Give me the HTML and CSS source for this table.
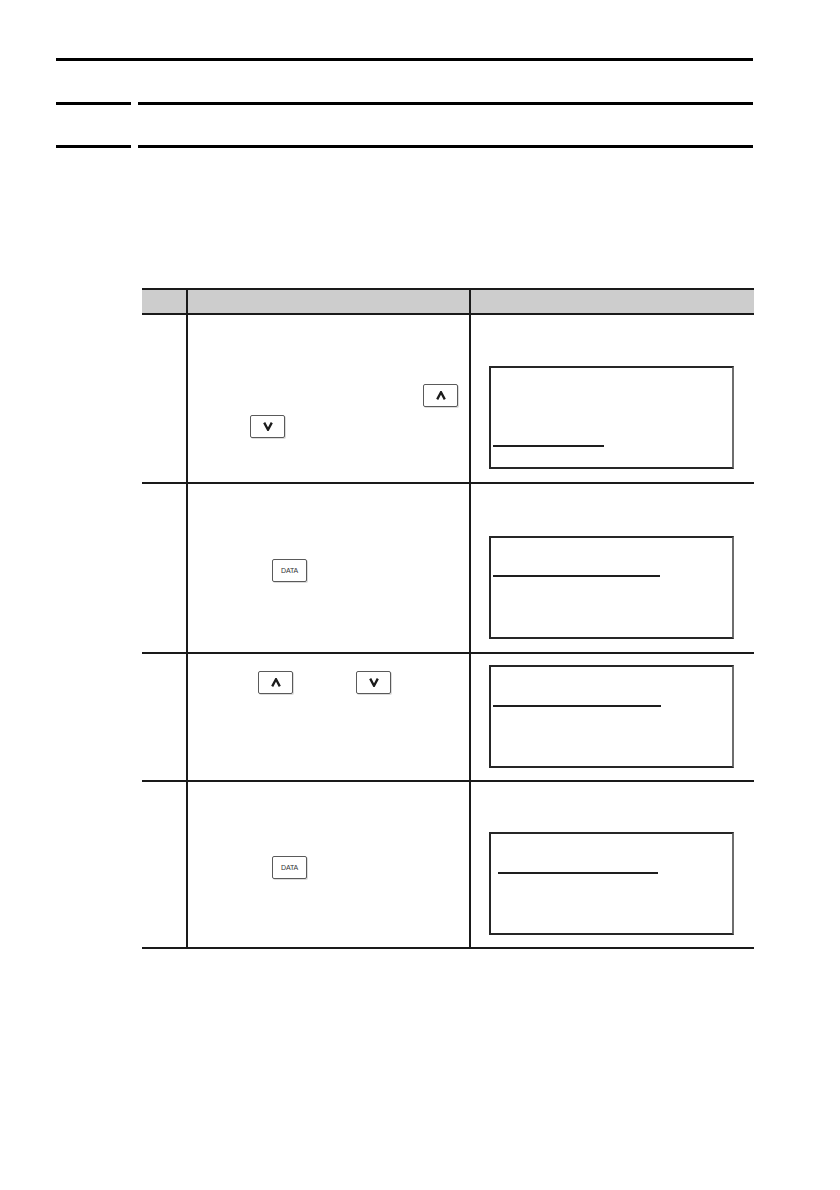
FILE: index.html
```
<!DOCTYPE html>
<html lang="en">
<head>
<meta charset="utf-8">
<title>Operation procedure</title>
<link rel="stylesheet" href="styles.css">
</head>
<body>
<div class="page">
  <div class="head">
    <div class="rule-top"></div>
    <div class="rule-split first"><span class="seg-l"></span><span class="seg-r"></span></div>
    <div class="rule-split second"><span class="seg-l"></span><span class="seg-r"></span></div>
  </div>

  <div class="table">
    <div class="row head-row">
      <div class="cell c1"></div>
      <div class="cell c2"></div>
      <div class="cell c3"></div>
    </div>

    <div class="row r1">
      <div class="cell c1"></div>
      <div class="cell c2">
        <div class="keys-stack">
          <span class="key key-up-r1"><svg viewBox="0 0 10 9" width="10" height="9"><polyline points="1.2,8.4 5,1.2 8.8,8.4"/></svg></span>
          <span class="key key-down-r1"><svg viewBox="0 0 10 9" width="10" height="9"><polyline points="1.2,0.6 5,7.8 8.8,0.6"/></svg></span>
        </div>
      </div>
      <div class="cell c3">
        <div class="lcd lcd-r1"><div class="uline ul-r1"></div></div>
      </div>
    </div>

    <div class="row r2">
      <div class="cell c1"></div>
      <div class="cell c2">
        <span class="key data key-data-r2">DATA</span>
      </div>
      <div class="cell c3">
        <div class="lcd lcd-r2"><div class="uline ul-r2"></div></div>
      </div>
    </div>

    <div class="row r3">
      <div class="cell c1"></div>
      <div class="cell c2">
        <div class="keys-row">
          <span class="key"><svg viewBox="0 0 10 9" width="10" height="9"><polyline points="1.2,8.4 5,1.2 8.8,8.4"/></svg></span>
          <span class="key"><svg viewBox="0 0 10 9" width="10" height="9"><polyline points="1.2,0.6 5,7.8 8.8,0.6"/></svg></span>
        </div>
      </div>
      <div class="cell c3">
        <div class="lcd lcd-r3"><div class="uline ul-r3"></div></div>
      </div>
    </div>

    <div class="row r4">
      <div class="cell c1"></div>
      <div class="cell c2">
        <span class="key data key-data-r4">DATA</span>
      </div>
      <div class="cell c3">
        <div class="lcd lcd-r4"><div class="uline ul-r4"></div></div>
      </div>
    </div>
  </div>
</div>
</body>
</html>
```

FILE: styles.css
```
html, body {
  margin: 0;
  padding: 0;
  background: #ffffff;
}

body {
  font-family: "Liberation Sans", Arial, sans-serif;
  color: #111;
}

.page {
  width: 840px;
  height: 1190px;
  overflow: hidden;
}

/* ---------- heading rules ---------- */
.head {
  padding-top: 58px;
  margin-left: 56px;
  width: 697px;
}

.rule-top {
  height: 3px;
  background: #000;
}

.rule-split {
  display: flex;
  gap: 7px;
}

.rule-split.first {
  margin-top: 41px;
}

.rule-split.second {
  margin-top: 40px;
}

.seg-l {
  display: block;
  width: 75px;
  height: 3px;
  background: #000;
}

.seg-r {
  display: block;
  flex: 1;
  height: 3px;
  background: #000;
}

/* ---------- table ---------- */
.table {
  margin-top: 140px;
  margin-left: 142px;
  width: 612px;
}

.row {
  display: grid;
  grid-template-columns: 46px 283px 283px;
  border-bottom: 2px solid #1a1a1a;
  box-sizing: border-box;
}

.head-row {
  border-top: 2px solid #1a1a1a;
  height: 27px;
  background: #cdcdcd;
}

.r1 { height: 169px; }
.r2 { height: 170px; }
.r3 { height: 128px; }
.r4 { height: 167px; }

.cell {
  box-sizing: border-box;
}

.c1, .c2 {
  border-right: 2px solid #1a1a1a;
}

/* ---------- keys ---------- */
.key {
  box-sizing: border-box;
  display: flex;
  align-items: center;
  justify-content: center;
  width: 35px;
  height: 23px;
  border: 1px solid #5a5a5a;
  border-radius: 2px;
  background: #fff;
  box-shadow: 1px 1px 0 #dcdcdc;
}

.key svg polyline {
  fill: none;
  stroke: #1c1c1c;
  stroke-width: 2.3;
  stroke-linejoin: miter;
  stroke-miterlimit: 8;
}

.key.data {
  font-size: 7px;
  color: #333;
  letter-spacing: -0.2px;
}

.keys-stack {
  display: flex;
  flex-direction: column;
  align-items: flex-start;
  gap: 8px;
  padding-top: 69px;
}

.key-up-r1 {
  margin-left: 235px;
}

.key-down-r1 {
  margin-left: 62px;
}

.key-data-r2 {
  margin: 75px 0 0 84px;
}

.key-data-r4 {
  margin: 74px 0 0 84px;
}

.keys-row {
  display: flex;
  gap: 63px;
  padding: 17px 0 0 70px;
}

/* ---------- LCD boxes ---------- */
.lcd {
  box-sizing: border-box;
  width: 245px;
  height: 103px;
  margin-left: 18px;
  border: 2px solid #262626;
  border-right-color: #6e6e6e;
  padding-left: 2px;
}

.lcd-r1 { margin-top: 51px; padding-top: 77px; }
.lcd-r2 { margin-top: 52px; padding-top: 37px; }
.lcd-r3 { margin-top: 11px; padding-top: 38px; }
.lcd-r4 { margin-top: 50px; padding-top: 38px; }

.uline {
  height: 2px;
  background: #1e1e1e;
}

.ul-r1 { width: 111px; }
.ul-r2 { width: 167px; }
.ul-r3 { width: 168px; }
.ul-r4 { width: 160px; margin-left: 5px; }
```
